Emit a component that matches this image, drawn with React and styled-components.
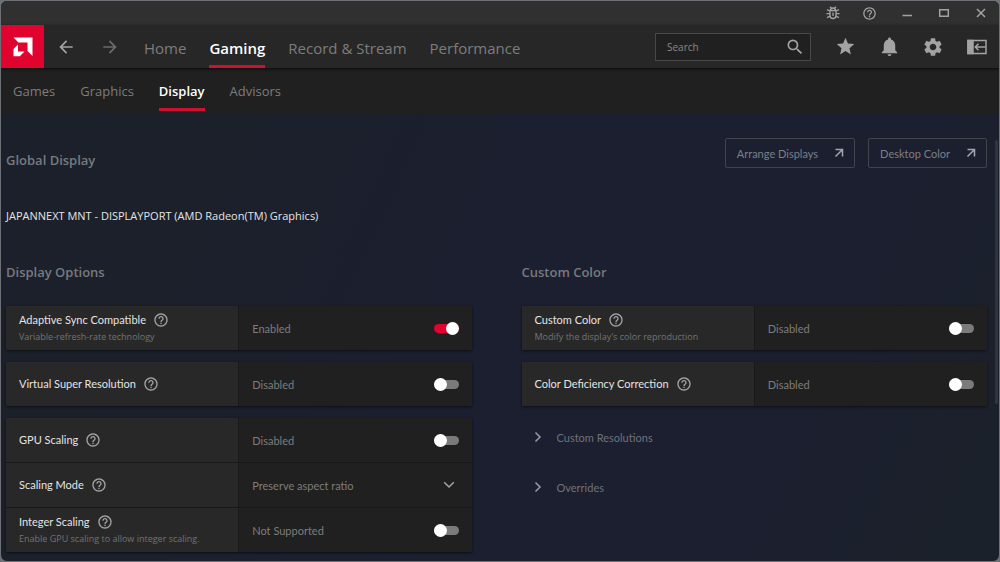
import React, { useState } from "react";
import styled, { createGlobalStyle, ThemeProvider } from "styled-components";
import {
  MdArrowBack,
  MdArrowForward,
  MdHelpOutline,
  MdNotifications,
  MdSearch,
  MdSettings,
  MdStar
} from "react-icons/md";

const theme = {
  red: "#e0032f",
  underline: "#d0102f",
  titleBar: "#303030",
  navBar: "#272727",
  subBar: "#202020",
  label: "#282828",
  value: "#202020",
  icon: "#a3a3a3",
  muted: "#7d7d7d",
  text: "#e4e4e4",
  bodyFont: `Lato, "Open Sans", sans-serif`
};

const GlobalStyle = createGlobalStyle`
  * {
    box-sizing: border-box;
  }

  body {
    margin: 0;
    background: #6d7175;
    font-family: "Open Sans", "Noto Sans", sans-serif;
    font-size: 11px;
    color: ${theme.text};
  }

  button, input, select {
    font: inherit;
    color: inherit;
  }
`;

const Window = styled.div`
  display: flex;
  flex-direction: column;
  min-height: 100vh;
  border: 1px solid #6d7175;
  border-radius: 7px;
  overflow: hidden;
  background: linear-gradient(115deg, #1b212b 0%, #1b202c 30%, #1b1f30 50%, #1b1f2f 80%, #1b212b 95%);
`;

const TitleBar = styled.div`
  display: flex;
  justify-content: flex-end;
  height: 24px;
  background: ${props => props.theme.titleBar};
`;

const IconButton = styled.button`
  display: flex;
  align-items: center;
  justify-content: center;
  width: ${props => props.$width || 44}px;
  padding: 0;
  border: 0;
  background: none;
  color: ${props => (props.$dim ? "#6c6c6c" : props.theme.icon)};
  cursor: pointer;
`;

const NavBar = styled.header`
  display: flex;
  height: 43px;
  background: ${props => props.theme.navBar};
  box-shadow: 0 1px 3px rgba(0, 0, 0, 0.7);
  z-index: 1;
`;

const Logo = styled.a`
  display: flex;
  align-items: center;
  justify-content: center;
  width: 43px;
  background: ${props => props.theme.red};
`;

const Tabs = styled.nav`
  display: flex;
  flex: 1;
  gap: 23px;
  padding-left: 12px;
`;

const Tab = styled.a`
  padding-top: 12px;
  border-bottom: 3px solid ${props => (props.$active ? props.theme.underline : "transparent")};
  font-size: 15px;
  line-height: 22px;
  font-weight: ${props => (props.$active ? 600 : 400)};
  color: ${props => (props.$active ? "#fff" : props.theme.muted)};
  text-decoration: none;
  white-space: nowrap;
`;

const SubBar = styled.nav`
  display: flex;
  gap: 25px;
  height: 45px;
  padding: 0 12px 2px;
  background: ${props => props.theme.subBar};
`;

const SubTab = styled(Tab)`
  padding-top: 13px;
  font-size: 13px;
  line-height: 20px;
`;

const SearchBox = styled.label`
  display: flex;
  align-items: center;
  align-self: center;
  width: 156px;
  height: 28px;
  margin-right: 12px;
  padding: 0 5px 0 11px;
  border: 1px solid #484848;
  background: #202020;
  color: ${props => props.theme.icon};
`;

const SearchInput = styled.input`
  flex: 1;
  min-width: 0;
  padding: 0;
  border: 0;
  outline: 0;
  background: none;
  font-size: 10px;

  &::placeholder {
    color: #8a8a8a;
    opacity: 1;
  }
`;

const Body = styled.div`
  display: flex;
  flex: 1;
`;

const Content = styled.main`
  flex: 1;
  padding: 25px 8px 8px 5px;
`;

const Scrollbar = styled.div`
  width: 3px;
  height: 264px;
  margin: 27px 1px 0 0;
  border-radius: 2px;
  background: #2f343f;
`;

const PageHead = styled.div`
  display: flex;
  align-items: flex-start;
  justify-content: space-between;
`;

const Heading = styled.h2`
  margin: 0;
  font-size: 13px;
  line-height: 20px;
  font-weight: 600;
  color: #777a7e;
`;

const PageTitle = styled(Heading)`
  padding-top: 12px;
`;

const Actions = styled.div`
  display: flex;
  gap: 13px;
`;

const ActionButton = styled.button`
  display: flex;
  align-items: center;
  gap: 16px;
  height: 30px;
  padding: 0 10px 0 11px;
  border: 1px solid #42444c;
  border-radius: 2px;
  background: none;
  color: #7c7f86;
  font-family: ${props => props.theme.bodyFont};
  cursor: pointer;
`;

const Monitor = styled.p`
  margin: 36px 0;
  line-height: 20px;
`;

const Columns = styled.div`
  display: grid;
  grid-template-columns: 1fr 1fr;
  gap: 50px;
  font-family: ${props => props.theme.bodyFont};
`;

const SectionTitle = styled(Heading)`
  font-family: "Open Sans", sans-serif;
`;

const Cards = styled.div`
  display: flex;
  flex-direction: column;
  gap: 12px;
  margin-top: 24px;
`;

const Card = styled.div`
  display: grid;
  gap: 1px;
  border-radius: 2px;
  background: #191919;
  box-shadow: 0 1px 3px rgba(0, 0, 0, 0.6);
`;

const Row = styled.div`
  display: grid;
  grid-template-columns: 1fr 1fr;
  gap: 1px;
  min-height: 44px;
`;

const LabelCell = styled.div`
  display: flex;
  flex-direction: column;
  justify-content: center;
  gap: 2px;
  padding: 0 13px;
  background: ${props => props.theme.label};
`;

const LabelLine = styled.div`
  display: flex;
  align-items: center;
  gap: 7px;
  line-height: 16px;
`;

const HelpButton = styled(IconButton)`
  width: 16px;
`;

const Note = styled.div`
  font-family: "Open Sans", sans-serif;
  font-size: 9px;
  line-height: 14px;
  color: #737373;
`;

const ValueCell = styled.div`
  display: flex;
  align-items: center;
  justify-content: space-between;
  padding: 0 13px;
  background: ${props => props.theme.value};
  color: ${props => props.theme.muted};
`;

const Toggle = styled.input`
  appearance: none;
  display: flex;
  align-items: center;
  width: 25px;
  height: 9px;
  margin: 0;
  border-radius: 5px;
  background: #7b7b7b;
  cursor: pointer;

  &::before {
    content: "";
    width: 13px;
    height: 13px;
    flex: none;
    border-radius: 50%;
    background: #fff;
  }

  &:checked {
    justify-content: flex-end;
    background: ${props => props.theme.red};
  }
`;

const SelectWrap = styled.div`
  display: grid;
  grid-template-columns: 1fr 16px;
  align-items: center;
  width: 100%;
`;

const Select = styled.select`
  appearance: none;
  grid-area: 1 / 1 / 2 / 3;
  padding: 0;
  border: 0;
  outline: 0;
  background: none;
  cursor: pointer;
`;

const SelectArrow = styled.svg`
  grid-area: 1 / 2;
  pointer-events: none;
`;

const Expander = styled.button`
  display: flex;
  align-items: center;
  gap: 14px;
  height: 50px;
  padding: 0 11px;
  border: 0;
  background: none;
  color: #6f727a;
  cursor: pointer;
`;

const Expanders = styled.div`
  display: flex;
  flex-direction: column;
  margin-top: -6px;
`;

const AmdMark = () => (
  <svg width="20" height="20" viewBox="0 0 20 20" fill="#fff" aria-hidden="true">
    <path d="M0.500 0.500h19v18.500l-5-5V5.500H5.500z" />
    <path d="M5 7.500v7h6.500l-4.700 4.700H0.500v-7.200z" />
  </svg>
);

const BugIcon = () => (
  <svg width="14" height="14" viewBox="0 0 14 14" fill="none" stroke="currentColor" strokeWidth="1.300" aria-hidden="true">
    <path d="M4 4.500h6v5a3 3 0 0 1-6 0z" />
    <path d="M4.500 4.300a2.500 2.300 0 0 1 5 0M4 0.800l1.500 1.500M10 0.800L8.500 2.300" />
    <path d="M1 3.600l3 1.400M13 3.600l-3 1.400M0.500 7.600H4M10 7.600h3.500M1 11.600l3.300-1.400M9.700 10.200l3.300 1.400M7 6.500v3.500" />
  </svg>
);

const MinimizeIcon = () => (
  <svg width="12" height="12" viewBox="0 0 12 12" stroke="currentColor" strokeWidth="1.500" aria-hidden="true">
    <path d="M1.500 8.500h9.500" />
  </svg>
);

const MaximizeIcon = () => (
  <svg width="12" height="12" viewBox="0 0 12 12" fill="none" stroke="currentColor" strokeWidth="1.500" aria-hidden="true">
    <path d="M1.700 2.700h8.600v6.600H1.700z" />
  </svg>
);

const CloseIcon = () => (
  <svg width="12" height="12" viewBox="0 0 12 12" stroke="currentColor" strokeWidth="1.500" aria-hidden="true">
    <path d="M2 2l8 8M10 2l-8 8" />
  </svg>
);

const PanelIcon = () => (
  <svg width="20" height="16" viewBox="0 0 20 16" fill="none" stroke="currentColor" strokeWidth="1.500" aria-hidden="true">
    <path d="M1 1.500h18v13H1z" />
    <path d="M1 1.500h5v13H1z" fill="currentColor" />
    <path d="M18.500 8H8.500M11.500 4.800L8.300 8l3.200 3.200" />
  </svg>
);

const OpenIcon = () => (
  <svg width="10" height="10" viewBox="0 0 10 10" fill="none" stroke="#a2a6b0" strokeWidth="1.500" aria-hidden="true">
    <path d="M1.500 1.500h7v7M8.500 1.500L1.500 8.500" />
  </svg>
);

const ChevronRight = () => (
  <svg width="10" height="12" viewBox="0 0 10 12" fill="none" stroke="#9297a5" strokeWidth="1.600" aria-hidden="true">
    <path d="M2.500 1.500L7 6l-4.500 4.500" />
  </svg>
);

const Help = ({ topic }) => (
  <HelpButton aria-label={`About ${topic}`}>
    <MdHelpOutline size={16} />
  </HelpButton>
);

const Label = ({ id, title, note }) => (
  <LabelCell>
    <LabelLine>
      <label htmlFor={id}>{title}</label>
      <Help topic={title} />
    </LabelLine>
    {note && <Note>{note}</Note>}
  </LabelCell>
);

const ToggleRow = ({ id, title, note, initial = false, offText = "Disabled" }) => {
  const [on, setOn] = useState(initial);

  return (
    <Row>
      <Label id={id} title={title} note={note} />
      <ValueCell>
        <span>{on ? "Enabled" : offText}</span>
        <Toggle id={id} type="checkbox" checked={on} onChange={() => setOn(!on)} />
      </ValueCell>
    </Row>
  );
};

const ScalingModeRow = () => (
  <Row>
    <Label id="scaling-mode" title="Scaling Mode" />
    <ValueCell>
      <SelectWrap>
        <Select id="scaling-mode" defaultValue="aspect">
          <option value="aspect">Preserve aspect ratio</option>
          <option value="full">Full panel</option>
          <option value="center">Center</option>
        </Select>
        <SelectArrow width="12" height="8" viewBox="0 0 12 8" fill="none" stroke="#a3a3a3" strokeWidth="1.500">
          <path d="M1.200 1.200L6 6l4.800-4.800" />
        </SelectArrow>
      </SelectWrap>
    </ValueCell>
  </Row>
);

const navTabs = ["Home", "Gaming", "Record & Stream", "Performance"];
const subTabs = ["Games", "Graphics", "Display", "Advisors"];

const App = () => (
  <ThemeProvider theme={theme}>
    <GlobalStyle />
    <Window>
      <TitleBar>
        <IconButton $width={37} aria-label="Report a bug"><BugIcon /></IconButton>
        <IconButton $width={37} aria-label="Help"><MdHelpOutline size={15} /></IconButton>
        <IconButton $width={37} aria-label="Minimize"><MinimizeIcon /></IconButton>
        <IconButton $width={37} aria-label="Maximize"><MaximizeIcon /></IconButton>
        <IconButton $width={37} aria-label="Close"><CloseIcon /></IconButton>
      </TitleBar>
      <NavBar>
        <Logo href="#home" aria-label="AMD"><AmdMark /></Logo>
        <IconButton aria-label="Back"><MdArrowBack size={20} /></IconButton>
        <IconButton $dim aria-label="Forward"><MdArrowForward size={20} /></IconButton>
        <Tabs>
          {navTabs.map(name => (
            <Tab key={name} href="#nav" $active={name === "Gaming"}>{name}</Tab>
          ))}
        </Tabs>
        <SearchBox>
          <SearchInput type="text" placeholder="Search" aria-label="Search" />
          <MdSearch size={20} />
        </SearchBox>
        <IconButton aria-label="Favorites"><MdStar size={21} /></IconButton>
        <IconButton aria-label="Notifications"><MdNotifications size={23} /></IconButton>
        <IconButton aria-label="Settings"><MdSettings size={22} /></IconButton>
        <IconButton aria-label="Dock panel"><PanelIcon /></IconButton>
      </NavBar>
      <SubBar>
        {subTabs.map(name => (
          <SubTab key={name} href="#sub" $active={name === "Display"}>{name}</SubTab>
        ))}
      </SubBar>
      <Body>
        <Content>
          <PageHead>
            <PageTitle>Global Display</PageTitle>
            <Actions>
              <ActionButton>Arrange Displays <OpenIcon /></ActionButton>
              <ActionButton>Desktop Color <OpenIcon /></ActionButton>
            </Actions>
          </PageHead>
          <Monitor>JAPANNEXT MNT - DISPLAYPORT (AMD Radeon(TM) Graphics)</Monitor>
          <Columns>
            <section>
              <SectionTitle>Display Options</SectionTitle>
              <Cards>
                <Card>
                  <ToggleRow id="sync" title="Adaptive Sync Compatible" note="Variable-refresh-rate technology" initial />
                </Card>
                <Card>
                  <ToggleRow id="vsr" title="Virtual Super Resolution" />
                </Card>
                <Card>
                  <ToggleRow id="gpu-scaling" title="GPU Scaling" />
                  <ScalingModeRow />
                  <ToggleRow
                    id="integer-scaling"
                    title="Integer Scaling"
                    note="Enable GPU scaling to allow integer scaling."
                    offText="Not Supported"
                  />
                </Card>
              </Cards>
            </section>
            <section>
              <SectionTitle>Custom Color</SectionTitle>
              <Cards>
                <Card>
                  <ToggleRow id="color" title="Custom Color" note="Modify the display's color reproduction" />
                </Card>
                <Card>
                  <ToggleRow id="cdc" title="Color Deficiency Correction" />
                </Card>
                <Expanders>
                  <Expander><ChevronRight /> Custom Resolutions</Expander>
                  <Expander><ChevronRight /> Overrides</Expander>
                </Expanders>
              </Cards>
            </section>
          </Columns>
        </Content>
        <Scrollbar />
      </Body>
    </Window>
  </ThemeProvider>
);

export default App;
